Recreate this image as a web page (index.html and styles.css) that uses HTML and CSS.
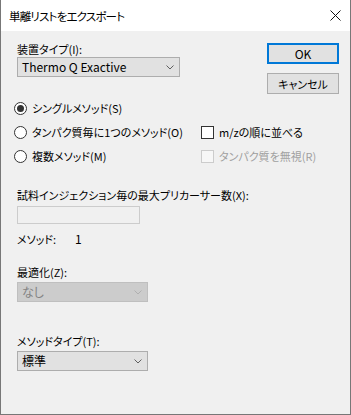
FILE: index.html
```html
<!DOCTYPE html>
<html lang="ja">
<head>
    <meta charset="UTF-8">
    <title>単離リストをエクスポート</title>
    <link rel="stylesheet" href="styles.css">
</head>
<body>
    <div class="window">
        <div class="titlebar">
            <span class="title">単離リストをエクスポート</span>
            <svg class="close" width="11" height="11" viewBox="0 0 11 11">
                <path d="M0.5 0.5 L10.5 10.5 M10.5 0.5 L0.5 10.5" stroke="#111" stroke-width="1" fill="none"/>
            </svg>
        </div>

        <div class="content">
            <div class="top-row">
                <div class="device">
                    <div class="field-label">装置タイプ(I):</div>
                    <div class="combo combo-wide">
                        <span class="latin">Thermo Q Exactive</span>
                        <svg class="chevron" width="8" height="5" viewBox="0 0 8 5"><path d="M0.5 0.5 L4 4 L7.5 0.5" stroke="#606060" fill="none"/></svg>
                    </div>
                </div>
                <div class="buttons">
                    <button class="btn btn-default latin">OK</button>
                    <button class="btn">キャンセル</button>
                </div>
            </div>

            <div class="options">
                <div class="option">
                    <span class="radio checked"></span>
                    <span>シングルメソッド(S)</span>
                </div>
                <div></div>
                <div class="option">
                    <span class="radio"></span>
                    <span>タンパク質毎に1つのメソッド(O)</span>
                </div>
                <div class="option">
                    <span class="check"></span>
                    <span>m/zの順に並べる</span>
                </div>
                <div class="option">
                    <span class="radio"></span>
                    <span>複数メソッド(M)</span>
                </div>
                <div class="option disabled">
                    <span class="check"></span>
                    <span>タンパク質を無視(R)</span>
                </div>
            </div>

            <div class="field-label precursor-label">試料インジェクション毎の最大プリカーサー数(X):</div>
            <div class="textbox"></div>

            <div class="method-count">
                <span class="count-label">メソッド:</span>
                <span class="latin">1</span>
            </div>

            <div class="field-label optimize-label">最適化(Z):</div>
            <div class="combo combo-short combo-disabled">
                <span>なし</span>
                <svg class="chevron" width="8" height="5" viewBox="0 0 8 5"><path d="M0.5 0.5 L4 4 L7.5 0.5" stroke="#b0b0b0" fill="none"/></svg>
            </div>

            <div class="field-label type-label">メソッドタイプ(T):</div>
            <div class="combo combo-short">
                <span>標準</span>
                <svg class="chevron" width="8" height="5" viewBox="0 0 8 5"><path d="M0.5 0.5 L4 4 L7.5 0.5" stroke="#606060" fill="none"/></svg>
            </div>
        </div>
    </div>
</body>
</html>
```

FILE: styles.css
```css
* {
    box-sizing: border-box;
}

body {
    margin: 0;
    background-color: #f0f0f0;
    font-family: "Noto Sans CJK JP", sans-serif;
    font-size: 11px;
    font-feature-settings: "palt";
    color: #000;
}

.latin {
    font-size: 12px;
}

.window {
    width: 351px;
    height: 415px;
    background-color: #f0f0f0;
    border: 1px solid #777;
    border-top: none;
}

.titlebar {
    height: 31px;
    background-color: #fff;
    display: flex;
    align-items: center;
    justify-content: space-between;
    padding: 0 9px 0 8px;
}

.title {
    font-size: 11.5px;
    letter-spacing: -0.8px;
    line-height: 16px;
}

.close {
    display: block;
    margin-top: -1px;
}

.content {
    padding: 0 11px 0 16px;
}

.field-label {
    line-height: 16px;
    height: 16px;
}

.top-row {
    display: flex;
    justify-content: space-between;
    padding-top: 10px;
}

.combo {
    height: 20px;
    background-color: #e1e1e1;
    border: 1px solid #adadad;
    display: flex;
    align-items: center;
    justify-content: space-between;
    padding: 0 5px 0 4px;
    line-height: 16px;
}

.combo-wide {
    width: 163px;
}

.combo-short {
    width: 131px;
    font-size: 12px;
}

.combo-disabled {
    background-color: #cccccc;
    border-color: #bfbfbf;
    color: #838383;
}

.chevron {
    display: block;
}

.buttons {
    display: flex;
    flex-direction: column;
    gap: 9px;
    padding-top: 2px;
}

.btn {
    width: 72px;
    height: 21px;
    background-color: #e1e1e1;
    border: 1px solid #adadad;
    font-family: inherit;
    font-size: 11px;
    font-feature-settings: "palt";
    line-height: 16px;
    padding: 0;
    color: #000;
}

.btn-default {
    border: 2px solid #0078d7;
    font-size: 12px;
}

.options {
    display: grid;
    grid-template-columns: 187px 1fr;
    grid-auto-rows: 24px;
    margin: 2px 0 0 -3px;
}

.option {
    display: flex;
    align-items: center;
    gap: 5px;
    line-height: 16px;
}

.radio {
    width: 13px;
    height: 13px;
    border: 1px solid #333;
    border-radius: 50%;
    background-color: #fff;
    display: flex;
    align-items: center;
    justify-content: center;
}

.radio.checked::after {
    content: "";
    width: 7px;
    height: 7px;
    border-radius: 50%;
    background-color: #333;
}

.check {
    width: 13px;
    height: 13px;
    border: 1px solid #333;
    background-color: #fff;
}

.disabled {
    color: #a0a0a0;
}

.disabled .check {
    border-color: #cccccc;
    background-color: #f7f7f7;
}

.precursor-label {
    margin-top: 19px;
}

.textbox {
    width: 123px;
    height: 18px;
    margin-top: 3px;
    border: 1px solid #cccccc;
    background-color: #f0f0f0;
}

.method-count {
    display: flex;
    line-height: 16px;
    margin-top: 7px;
}

.count-label {
    width: 58px;
}

.optimize-label {
    margin-top: 17px;
    margin-bottom: 2px;
}

.type-label {
    margin-top: 31px;
    margin-bottom: 2px;
}
```
